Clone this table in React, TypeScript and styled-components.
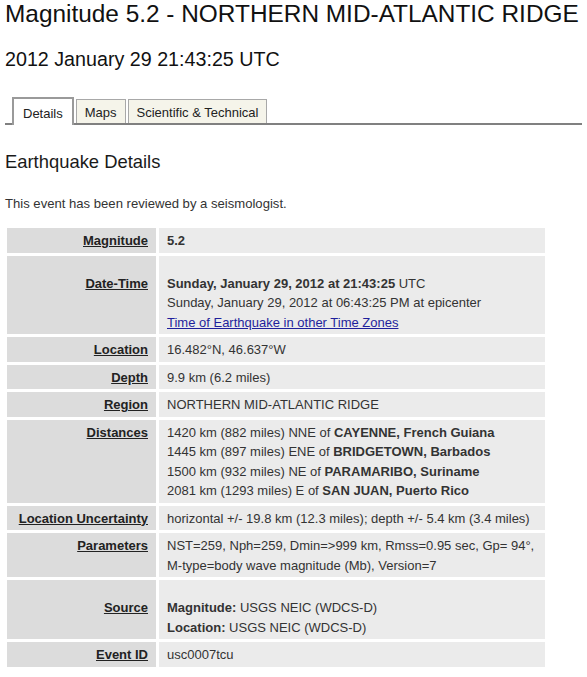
import styled, { createGlobalStyle } from 'styled-components';

const GlobalStyle = createGlobalStyle`
  html, body {
    margin: 0;
    padding: 0;
    background: #ffffff;
  }
  body {
    font-family: 'Liberation Sans', Arial, sans-serif;
    color: #222;
  }
`;

type Row = {
  label: string;
  lead?: boolean;
  value: React.ReactNode;
};

const rows: Row[] = [
  { label: 'Magnitude', value: <strong>5.2</strong> },
  {
    label: 'Date-Time',
    lead: true,
    value: (
      <>
        <strong>Sunday, January 29, 2012 at 21:43:25</strong> UTC
        <br />
        Sunday, January 29, 2012 at 06:43:25 PM at epicenter
        <br />
        <a href='#'>Time of Earthquake in other Time Zones</a>
      </>
    ),
  },
  { label: 'Location', value: '16.482°N, 46.637°W' },
  { label: 'Depth', value: '9.9 km (6.2 miles)' },
  { label: 'Region', value: 'NORTHERN MID-ATLANTIC RIDGE' },
  {
    label: 'Distances',
    value: (
      <>
        1420 km (882 miles) NNE of <strong>CAYENNE, French Guiana</strong>
        <br />
        1445 km (897 miles) ENE of <strong>BRIDGETOWN, Barbados</strong>
        <br />
        1500 km (932 miles) NE of <strong>PARAMARIBO, Suriname</strong>
        <br />
        2081 km (1293 miles) E of <strong>SAN JUAN, Puerto Rico</strong>
      </>
    ),
  },
  {
    label: 'Location Uncertainty',
    value: 'horizontal +/- 19.8 km (12.3 miles); depth +/- 5.4 km (3.4 miles)',
  },
  {
    label: 'Parameters',
    value: (
      <>
        NST=259, Nph=259, Dmin=&gt;999 km, Rmss=0.95 sec, Gp= 94°,
        <br />
        M-type=body wave magnitude (Mb), Version=7
      </>
    ),
  },
  {
    label: 'Source',
    lead: true,
    value: (
      <>
        <strong>Magnitude:</strong> USGS NEIC (WDCS-D)
        <br />
        <strong>Location:</strong> USGS NEIC (WDCS-D)
      </>
    ),
  },
  { label: 'Event ID', value: 'usc0007tcu' },
];

const tabs = ['Details', 'Maps', 'Scientific & Technical'];

export default function App() {
  return (
    <PageStyled>
      <GlobalStyle />
      <h1 className='title'>Magnitude 5.2 - NORTHERN MID-ATLANTIC RIDGE</h1>
      <h2 className='date'>2012 January 29 21:43:25 UTC</h2>

      <TabBar>
        {tabs.map((tab, i) => (
          <Tab key={tab} $active={i === 0}>
            {tab}
          </Tab>
        ))}
      </TabBar>

      <h3 className='section'>Earthquake Details</h3>
      <p className='note'>This event has been reviewed by a seismologist.</p>

      <DetailsTable>
        <colgroup>
          <col style={{ width: 149 }} />
          <col />
        </colgroup>
        <tbody>
          {rows.map((row) => (
            <tr key={row.label}>
              <LabelCell $lead={row.lead}>
                <span>{row.label}</span>
              </LabelCell>
              <ValueCell $lead={row.lead}>{row.value}</ValueCell>
            </tr>
          ))}
        </tbody>
      </DetailsTable>
    </PageStyled>
  );
}

const PageStyled = styled.div`
  padding: 0 5px;
  width: 587px;
  box-sizing: border-box;

  .title {
    margin: 0;
    font-size: 24.4px;
    line-height: 28px;
    font-weight: normal;
    color: #111;
    white-space: nowrap;
  }

  .date {
    margin: 20px 0 0;
    font-size: 19.7px;
    line-height: 22px;
    font-weight: normal;
    color: #111;
  }

  .section {
    margin: 26px 0 0;
    font-size: 18.4px;
    line-height: 22px;
    font-weight: normal;
    color: #1a1a1a;
  }

  .note {
    margin: 23px 0 0;
    font-size: 13.1px;
    line-height: 16px;
    color: #333;
  }
`;

const TabBar = styled.div`
  margin-top: 27px;
  display: flex;
  align-items: flex-end;
  gap: 2px;
  padding-left: 7px;
  border-bottom: 2px solid #808080;
  height: 26px;
`;

const Tab = styled.div<{ $active?: boolean }>`
  box-sizing: border-box;
  display: flex;
  align-items: center;
  font-size: 13px;
  color: #222;
  white-space: nowrap;
  padding-top: 2px;
  height: ${(p) => (p.$active ? '28px' : '24px')};
  margin-bottom: ${(p) => (p.$active ? '-2px' : '0')};
  background: ${(p) => (p.$active ? '#ffffff' : '#f5f4ea')};
  border: ${(p) => (p.$active ? '2px solid #9a9a9a' : '1px solid #a8a8a8')};
  border-bottom: none;
  padding-left: ${(p) => (p.$active ? '9px' : '8px')};
  padding-right: ${(p) => (p.$active ? '9px' : '8px')};
`;

const DetailsTable = styled.table`
  margin-top: 13px;
  margin-left: -1px;
  width: 544px;
  table-layout: fixed;
  border-collapse: separate;
  border-spacing: 3px;
  font-size: 13px;
  line-height: 19.5px;
`;

const LabelCell = styled.th<{ $lead?: boolean }>`
  background: #dcdcdc;
  text-align: right;
  vertical-align: top;
  padding: ${(p) => (p.$lead ? '18px' : '3px')} 8px 2px;
  font-weight: bold;
  color: #222;
  white-space: nowrap;

  span {
    text-decoration: underline;
  }
`;

const ValueCell = styled.td<{ $lead?: boolean }>`
  background: #ebebeb;
  vertical-align: top;
  padding: ${(p) => (p.$lead ? '18px' : '3px')} 8px 2px 8px;
  color: #333;
  white-space: nowrap;

  strong {
    color: #333;
  }

  a {
    color: #1f1f9c;
    text-decoration: underline;
  }
`;
